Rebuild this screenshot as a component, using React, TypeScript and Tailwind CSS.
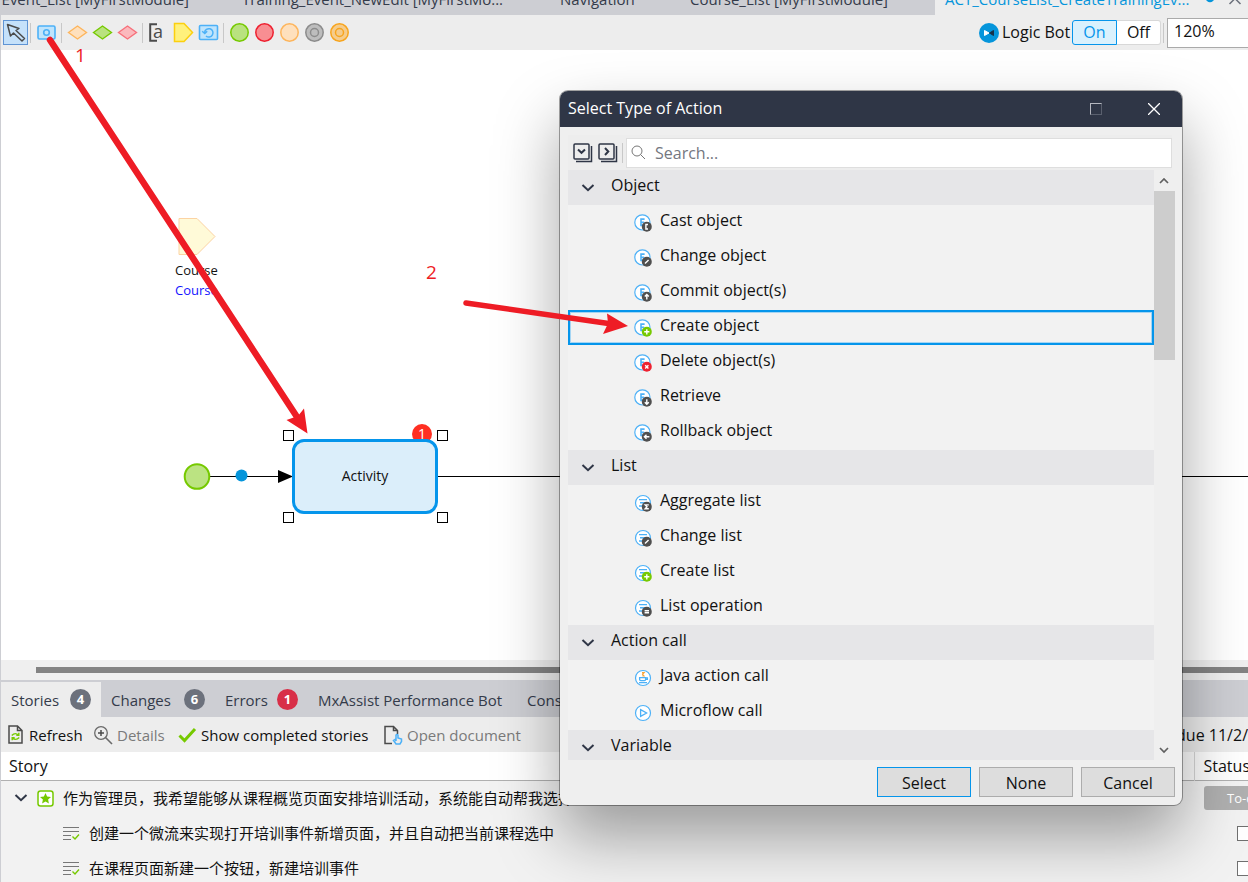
import React from "react";

const BLUE = "#4db1f7";
const DARK = "#4f4f4f";

type BadgeKind = "cast" | "change" | "commit" | "create" | "delete" | "retrieve" | "rollback" | "sum" | "equals";

const badgeMarks: Record<BadgeKind, string> = {
  cast: "M14 10.5H11.9V15H14",
  change: "M11 14.6L14.6 11",
  commit: "M12.8 15.4V10.6M10.8 12.4L12.8 10.4L14.8 12.4",
  create: "M12.8 10.2V15.4M10.2 12.8H15.4",
  delete: "M11.2 11.2L14.4 14.4M14.4 11.2L11.2 14.4",
  retrieve: "M12.8 10.2V15M10.8 13.2L12.8 15.2L14.8 13.2",
  rollback: "M15.4 12.8H10.6M12.5 10.8L10.4 12.8L12.5 14.8",
  sum: "M14.8 10.9H11.2L13 12.8L11.2 14.7H14.8",
  equals: "M10.6 11.8H15M10.6 13.8H15",
};

function Badge({ kind }: { kind: BadgeKind }) {
  const fill = kind === "create" ? "#76c900" : kind === "delete" ? "#ee2130" : DARK;
  return (
    <>
      <circle cx="12.8" cy="12.8" r="5" fill={fill} />
      <path d={badgeMarks[kind]} fill="none" stroke="#fff" strokeWidth="1.4" />
    </>
  );
}

function ObjectIcon({ kind }: { kind: BadgeKind }) {
  return (
    <svg width="18" height="18" viewBox="0 0 18 18" aria-hidden="true">
      <circle cx="8.4" cy="8.4" r="7.6" fill="#fff" stroke={BLUE} strokeWidth="1.2" />
      <path d="M10.6 5.1H7V11.4H10.6M7 8.2H10.2" fill="none" stroke={BLUE} strokeWidth="1.6" />
      <Badge kind={kind} />
    </svg>
  );
}

function ListIcon({ kind }: { kind: BadgeKind }) {
  return (
    <svg width="18" height="18" viewBox="0 0 18 18" aria-hidden="true">
      <circle cx="9" cy="9" r="7.5" fill="#fff" stroke={BLUE} strokeWidth="1.2" />
      <path d="M5 5.6H13M6 8.8H13M5 12H9" fill="none" stroke={BLUE} strokeWidth="1.4" />
      <Badge kind={kind} />
    </svg>
  );
}

function JavaIcon() {
  return (
    <svg width="18" height="18" viewBox="0 0 18 18" aria-hidden="true">
      <circle cx="9" cy="9" r="7.5" fill="#fff" stroke={BLUE} strokeWidth="1.2" />
      <path d="M5.6 8.6H11.6V10.6Q11.6 11.6 10.4 11.6H6.8Q5.6 11.6 5.6 10.6ZM11.6 8.8H13.4V10.4H11.6M5 13.6H13" fill="none" stroke={BLUE} strokeWidth="1.3" />
      <path d="M8 3.6H10L8.6 5.2L9.8 6.8H8.4" fill="none" stroke="#f9a63a" strokeWidth="1.3" />
    </svg>
  );
}

function MicroflowIcon() {
  return (
    <svg width="18" height="18" viewBox="0 0 18 18" aria-hidden="true">
      <circle cx="9" cy="9" r="7.5" fill="#fff" stroke={BLUE} strokeWidth="1.2" />
      <path d="M6.6 5.6L12.6 9L6.6 12.4Z" fill="none" stroke={BLUE} strokeWidth="1.3" />
    </svg>
  );
}

function Chevron() {
  return (
    <svg width="14" height="10" viewBox="0 0 14 10" aria-hidden="true">
      <path d="M1.5 2L7 7.2L12.5 2" fill="none" stroke="#2f3646" strokeWidth="2" />
    </svg>
  );
}

const groups: { title: string; items: { label: string; icon: React.ReactNode }[] }[] = [
  {
    title: "Object",
    items: [
      { label: "Cast object", icon: <ObjectIcon kind="cast" /> },
      { label: "Change object", icon: <ObjectIcon kind="change" /> },
      { label: "Commit object(s)", icon: <ObjectIcon kind="commit" /> },
      { label: "Create object", icon: <ObjectIcon kind="create" /> },
      { label: "Delete object(s)", icon: <ObjectIcon kind="delete" /> },
      { label: "Retrieve", icon: <ObjectIcon kind="retrieve" /> },
      { label: "Rollback object", icon: <ObjectIcon kind="rollback" /> },
    ],
  },
  {
    title: "List",
    items: [
      { label: "Aggregate list", icon: <ListIcon kind="sum" /> },
      { label: "Change list", icon: <ListIcon kind="change" /> },
      { label: "Create list", icon: <ListIcon kind="create" /> },
      { label: "List operation", icon: <ListIcon kind="equals" /> },
    ],
  },
  {
    title: "Action call",
    items: [
      { label: "Java action call", icon: <JavaIcon /> },
      { label: "Microflow call", icon: <MicroflowIcon /> },
    ],
  },
  { title: "Variable", items: [] },
];

function Separator() {
  return <span className="flex h-5 w-[6px] shrink-0 pl-[2px]"><span className="w-px bg-[#c8c8c8]" /></span>;
}

function Tool({ label, active, children }: { label: string; active?: boolean; children: React.ReactNode }) {
  return (
    <button
      aria-label={label}
      className={
        active
          ? "grid h-[25px] w-[25px] shrink-0 place-items-center border border-[#5f94d4] bg-[#c5e1fa]"
          : "grid h-[25px] w-[25px] shrink-0 place-items-center"
      }
    >
      <svg width="23" height="23" viewBox="0 0 23 23" aria-hidden="true" fill="none">
        {children}
      </svg>
    </button>
  );
}

function DocumentTabs() {
  return (
    <nav className="flex h-[15px] shrink-0 overflow-hidden bg-[#cdced3] text-[15px] text-[#343b4a]">
      <a href="#event-list" className="flex w-[188px] shrink-0 items-end justify-end whitespace-nowrap pb-[6px] leading-5">Event_List [MyFirstModule]</a>
      <a href="#new-edit" className="flex w-[319px] shrink-0 items-end whitespace-nowrap pb-[6px] pl-[53px] leading-5">Training_Event_NewEdit [MyFirstMo...</a>
      <a href="#navigation" className="flex w-[130px] shrink-0 items-end whitespace-nowrap pb-[6px] pl-[52px] leading-5">Navigation</a>
      <a href="#course-list" className="flex grow items-end whitespace-nowrap pb-[6px] pl-[52px] leading-5">Course_List [MyFirstModule]</a>
      <div className="flex w-[313px] shrink-0 items-end bg-[#ededed] pl-[10px] text-[#0595db]">
        <a href="#create-training" className="w-[258px] whitespace-nowrap pb-[6px] leading-5">ACT_CourseList_CreateTrainingEv...</a>
        <svg className="self-start" width="45" height="8" viewBox="0 0 45 8" aria-hidden="true">
          <circle cx="7" cy="-2" r="4.3" fill="#0595db" />
          <path d="M26.5 4L32 -1.5L37.5 4" fill="none" stroke="#6c717c" strokeWidth="1.5" />
        </svg>
      </div>
    </nav>
  );
}

function EditorToolbar() {
  return (
    <div className="flex h-[35px] shrink-0 items-center overflow-hidden bg-[#ededed] pl-[2px]">
      <Tool label="Select" active>
        <path d="M3.5 3.5L6.5 15L9.5 12L18 20L20.5 17.5L12 9.5L15 7.5Z" stroke="#4b4b4b" strokeWidth="1.5" strokeLinejoin="round" />
      </Tool>
      <Separator />
      <Tool label="Activity">
        <rect x="3" y="5" width="17" height="13" rx="1.5" fill="#bfe4fc" stroke={BLUE} strokeWidth="1.6" />
        <circle cx="11.5" cy="11.5" r="2.8" stroke={BLUE} strokeWidth="1.6" />
      </Tool>
      <Separator />
      <Tool label="Decision">
        <path d="M2.5 11.5L11.5 5L20.5 11.5L11.5 18Z" fill="#fee0bd" stroke="#fdb55c" strokeWidth="1.4" />
      </Tool>
      <Tool label="Merge">
        <path d="M2.5 11.5L11.5 5L20.5 11.5L11.5 18Z" fill="#b9e27f" stroke="#76c900" strokeWidth="1.4" />
      </Tool>
      <Tool label="Object type decision">
        <path d="M2.5 11.5L11.5 5L20.5 11.5L11.5 18Z" fill="#fbb9bd" stroke="#f7717b" strokeWidth="1.4" />
      </Tool>
      <Separator />
      <button aria-label="Annotation" className="flex h-[25px] w-[25px] shrink-0 items-center pl-[2px] text-[#4b4b4b]">
        <svg width="9" height="19" viewBox="0 0 9 19" aria-hidden="true"><path d="M9 1.2H2.2V17.8H9" fill="none" stroke="currentColor" strokeWidth="2" /></svg>
        <span className="-ml-1 pb-[3px] text-[18px] font-medium leading-5">a</span>
      </button>
      <Tool label="Parameter">
        <path d="M2.5 2.5H12L20.5 11.5L12 20.5H2.5Z" fill="#fff17c" stroke="#fcd00f" strokeWidth="1.5" />
      </Tool>
      <Tool label="Loop">
        <rect x="2.5" y="4.5" width="18" height="14" rx="1" fill="#bfe4fc" stroke={BLUE} strokeWidth="1.6" />
        <path d="M9 15A4.2 4.2 0 1 0 7.6 11.5M5.2 10.3L7.8 12.6L10.2 10.3" stroke={BLUE} strokeWidth="1.5" />
      </Tool>
      <Separator />
      <Tool label="Start event"><circle cx="11.5" cy="11.5" r="8.7" fill="#b9e27f" stroke="#76c900" strokeWidth="1.5" /></Tool>
      <Tool label="End event"><circle cx="11.5" cy="11.5" r="8.7" fill="#f88e92" stroke="#ee2130" strokeWidth="1.5" /></Tool>
      <Tool label="Error event"><circle cx="11.5" cy="11.5" r="8.7" fill="#fee0bd" stroke="#fdb55c" strokeWidth="1.5" /></Tool>
      <Tool label="Continue event">
        <circle cx="11.5" cy="11.5" r="8.7" fill="#bdbdbd" stroke="#8c8c8c" strokeWidth="1.5" />
        <circle cx="11.5" cy="11.5" r="4" stroke="#8c8c8c" strokeWidth="1.5" />
      </Tool>
      <Tool label="Break event">
        <circle cx="11.5" cy="11.5" r="8.7" fill="#f5cc8c" stroke="#f7a41d" strokeWidth="1.5" />
        <circle cx="11.5" cy="11.5" r="4" stroke="#f7a41d" strokeWidth="1.5" />
      </Tool>
      <div className="ml-auto flex shrink-0 items-center">
        <svg width="20" height="20" viewBox="0 0 20 20" aria-hidden="true">
          <circle cx="10" cy="10" r="10" fill="#0595db" />
          <path d="M5.5 7.5L10 10L5.5 12.5Z" fill="#fff" stroke="#fff" strokeLinejoin="round" />
          <path d="M14.500 7.5L10.5 10L14.500 12.500Z" fill="#18324a" stroke="#18324a" strokeLinejoin="round" />
        </svg>
        <span className="w-[73px] whitespace-nowrap pb-[2px] pl-[3px] leading-5">Logic Bot</span>
        <button className="h-[25px] w-[45px] rounded-l-[3px] border border-[#0595eb] bg-[#daf1fd] pb-px leading-5 text-[#0595eb]">On</button>
        <button className="h-[25px] w-11 rounded-r-[3px] border border-l-0 border-[#d8d8d8] bg-white pb-px leading-5">Off</button>
        <Separator />
        <input aria-label="Zoom" defaultValue="120%" className="h-[30px] w-[81px] border border-r-0 border-[#aaaaaa] bg-white pb-1 pl-[6px] outline-none" />
      </div>
    </div>
  );
}

function Handle({ className }: { className: string }) {
  return <span className={"absolute size-[11px] border border-black bg-white " + className} />;
}

function Canvas() {
  return (
    <main className="relative min-h-0 grow overflow-hidden bg-white">
      <svg className="absolute left-[176px] top-[166px]" width="40" height="40" viewBox="0 0 40 40" aria-hidden="true">
        <path d="M2 2.5H20L38 20.5L20 38.5H2Z" fill="#fffad8" stroke="#fcd3a3" />
      </svg>
      <span className="absolute left-[174px] top-[211px] text-[13px] leading-[18px]">Course</span>
      <span className="absolute left-[174px] top-[231px] text-[13px] leading-[18px] text-[#1414ff]">Course</span>
      <span className="absolute left-[196px] right-0 top-[426px] h-px bg-black" />
      <svg className="absolute left-[182px] top-[412px]" width="112" height="30" viewBox="0 0 112 30" aria-hidden="true">
        <circle cx="14" cy="14.5" r="12.3" fill="#bbe382" stroke="#76c900" strokeWidth="2" />
        <circle cx="58.5" cy="13.5" r="6" fill="#0595db" />
        <path d="M95 8L110 14.5L95 21Z" fill="#000" />
      </svg>
      <span className="absolute left-[411px] top-[374px] size-5 rounded-full bg-[#ff2f22]" />
      <div className="absolute left-[291px] top-[389px] grid h-[75px] w-[146px] place-items-center rounded-[12px] border-[3px] border-[#0595eb] bg-[#dbeefa] pb-px text-[14px]">Activity</div>
      <span className="absolute left-[411px] top-[376px] w-5 text-center text-[14px] leading-4 text-white">1</span>
      <Handle className="left-[282px] top-[380px]" />
      <Handle className="left-[436px] top-[380px]" />
      <Handle className="left-[282px] top-[462px]" />
      <Handle className="left-[436px] top-[462px]" />
    </main>
  );
}

function PanelTab({ label, count, className }: { label: string; count?: { value: number; tone: string }; className: string }) {
  return (
    <button className={"flex shrink-0 items-center justify-between whitespace-nowrap px-[10px] " + className}>
      {label}
      {count && (
        <span className={"grid size-[21px] place-items-center rounded-full pb-[2px] text-[13px] font-bold leading-4 text-white " + count.tone}>{count.value}</span>
      )}
    </button>
  );
}

function StoryLine({ text }: { text: string }) {
  return (
    <div className="flex h-[35px] items-center gap-[9px] whitespace-nowrap pl-[62px]">
      <svg width="17" height="16" viewBox="0 0 17 16" aria-hidden="true">
        <path d="M0 2.5H16M0 6.5H16M0 10.5H8M0 14.5H8" stroke="#777" fill="none" />
        <path d="M9.5 11.5L12 14L16 9.5" stroke="#76c900" strokeWidth="1.4" fill="none" />
      </svg>
      {text}
    </div>
  );
}

function StoriesPanel() {
  return (
    <section className="h-[222px] shrink-0 overflow-hidden">
      <div className="flex h-5 items-center bg-[#efefef] pl-[35px]"><div className="h-[6px] grow bg-[#838383]" /></div>
      <div className="flex h-[37px] overflow-hidden bg-[#cdced3] pt-[2px] text-[15px] text-[#343b4a]">
        <PanelTab label="Stories" count={{ value: 4, tone: "bg-[#6c717c]" }} className="w-[100px] bg-[#ededed]" />
        <PanelTab label="Changes" count={{ value: 6, tone: "bg-[#6c717c]" }} className="w-[114px]" />
        <PanelTab label="Errors" count={{ value: 1, tone: "bg-[#d82f48]" }} className="w-[93px]" />
        <PanelTab label="MxAssist Performance Bot" className="w-[209px]" />
        <PanelTab label="Console" className="w-20" />
      </div>
      <div className="flex h-[35px] items-center overflow-hidden whitespace-nowrap bg-[#ededed] pl-[7px] text-[15px]">
        <button className="flex w-[85px] shrink-0 items-center gap-[6px]">
          <svg width="15" height="19" viewBox="0 0 15 19" fill="none" aria-hidden="true">
            <path d="M1 1H9.5L14 5.5V18H1ZM9.5 1V5.5H14" stroke="#4b4b4b" strokeWidth="1.5" />
            <path d="M3.8 10.5Q7 7 10.500 10M10.800 7.800V10.300H8.300M11.200 12.500Q8 16 4.500 13M4.200 15.200V12.700H6.700" stroke="#76c900" strokeWidth="1.4" />
          </svg>
          Refresh
        </button>
        <button disabled className="flex w-[85px] shrink-0 items-center gap-[4px] text-[#7a7a7a]">
          <svg width="20" height="20" viewBox="0 0 20 20" fill="none" aria-hidden="true">
            <circle cx="8" cy="8" r="6.3" stroke="#6a6a6a" strokeWidth="1.3" />
            <path d="M8 5V11M5 8H11" stroke="#4b4b4b" strokeWidth="1.5" />
            <path d="M12.5 12.5L19 19" stroke="#6a6a6a" strokeWidth="1.6" />
          </svg>
          Details
        </button>
        <button className="flex w-[205px] shrink-0 items-center gap-1">
          <svg width="19" height="16" viewBox="0 0 19 16" fill="none" aria-hidden="true">
            <path d="M1.5 8.5L6.5 13.5L17 2" stroke="#76c900" strokeWidth="3" />
          </svg>
          Show completed stories
        </button>
        <button disabled className="flex shrink-0 items-center gap-1 text-[#7a7a7a]">
          <svg width="20" height="20" viewBox="0 0 20 20" fill="none" aria-hidden="true">
            <path d="M9 18.5H2V1.5H10.5L14.5 5.5V9M10.5 1.5V5.5H14.5" stroke="#4b4b4b" strokeWidth="1.5" />
            <path d="M13 16V10Q14 9 15 10V13L18.5 14V16.5L17 19H13L10.5 15.5L12 14.5L13 16" stroke={BLUE} strokeWidth="1.5" />
          </svg>
          Open document
        </button>
        <span className="ml-auto shrink-0 text-[16px]">due 11/2/</span>
      </div>
      <table className="w-full table-fixed border-collapse bg-[#f2f2f2] text-left">
        <thead>
          <tr className="h-7 border-b border-[#b0b0b0] bg-white">
            <th className="pl-2 font-normal">Story</th>
            <th className="w-[54px] border-l border-[#d8d8d8] pl-[9px] font-normal">Status</th>
          </tr>
        </thead>
        <tbody className="text-[15px]">
          <tr>
            <td className="p-0">
              <div className="flex h-[35px] items-center whitespace-nowrap pl-[13px]">
                <Chevron />
                <svg className="mx-[9px]" width="17" height="17" viewBox="0 0 17 17" aria-hidden="true">
                  <rect x="1" y="1" width="15" height="15" rx="2.5" fill="#fff" stroke="#76c900" strokeWidth="1.5" />
                  <path d="M8.5 3L10.1 6.6L14 7L11.1 9.6L11.9 13.5L8.5 11.5L5.1 13.5L5.9 9.6L3 7L6.9 6.6Z" fill="#76c900" />
                </svg>
                作为管理员，我希望能够从课程概览页面安排培训活动，系统能自动帮我选择
              </div>
            </td>
            <td className="overflow-hidden p-0">
              <div className="ml-[10px] h-6 w-20 whitespace-nowrap rounded-[3px] bg-[#b0b0b0] pl-[23px] text-[13px] leading-6 text-white">To-do</div>
            </td>
          </tr>
          {["创建一个微流来实现打开培训事件新增页面，并且自动把当前课程选中", "在课程页面新建一个按钮，新建培训事件"].map((text) => (
            <tr key={text}>
              <td className="p-0"><StoryLine text={text} /></td>
              <td className="overflow-hidden p-0">
                <div className="flex pl-[43px]">
                  <input type="checkbox" aria-label={text} className="size-[15px] shrink-0 appearance-none border border-[#707070] bg-white" />
                </div>
              </td>
            </tr>
          ))}
        </tbody>
      </table>
    </section>
  );
}

function ActionDialog() {
  return (
    <div
      role="dialog"
      aria-labelledby="action-title"
      className="absolute left-[560px] top-[91px] flex h-[714px] w-[622px] flex-col overflow-hidden rounded-[8px] bg-[#efefef] shadow-[0_0_0_1px_rgba(0,0,0,0.35),0_32px_64px_rgba(0,0,0,0.36)]"
    >
      <header className="flex h-9 shrink-0 items-center bg-[#2f3646] pl-2 pr-[22px] text-white">
        <h1 id="action-title" className="grow pb-[2px]">Select Type of Action</h1>
        <button aria-label="Maximize" className="mr-[46px] size-3 border border-[#5a606e] border-l-[#b4b7bf] border-t-[#b4b7bf]" />
        <button aria-label="Close">
          <svg width="12" height="12" viewBox="0 0 12 12" aria-hidden="true"><path d="M0 0L12 12M12 0L0 12" stroke="#fff" strokeWidth="1.3" /></svg>
        </button>
      </header>
      <div className="ml-2 mr-[10px] mt-2 flex h-[35px] shrink-0 items-center bg-[#ededed]">
        {["Expand all", "Collapse all"].map((label, index) => (
          <button key={label} aria-label={label} className="flex h-[25px] w-[25px] items-center pl-[5px]">
            <svg className="shrink-0" width="20" height="20" viewBox="0 0 20 20" fill="none" aria-hidden="true">
              <rect x="1" y="1" width="15" height="15" rx="1" stroke="#2f3646" strokeWidth="1.5" />
              <path d="M18.5 3V18.5H3" stroke="#2f3646" strokeWidth="1.5" />
              <path d={index === 0 ? "M5 6.5L8.5 9.8L12 6.5" : "M7 5L10.3 8.5L7 12"} stroke="#2f3646" strokeWidth="2" />
            </svg>
          </button>
        ))}
        <span className="ml-1 mr-[3px] h-5 w-px bg-[#c8c8c8]" />
        <label className="flex h-[30px] grow items-center gap-[9px] border border-[#dedede] bg-white pl-1">
          <svg width="15" height="15" viewBox="0 0 15 15" fill="none" aria-hidden="true">
            <circle cx="6" cy="6" r="5" stroke="#777" />
            <path d="M9.5 9.5L14 14" stroke="#777" />
          </svg>
          <input aria-label="Search" placeholder="Search..." className="min-w-0 grow bg-transparent outline-none placeholder:text-[#74777f]" />
        </label>
      </div>
      <div className="ml-2 mr-[7px] flex min-h-0 grow">
        <div className="min-w-0 grow overflow-hidden bg-[#f2f2f2]">
          {groups.map((group) => (
            <section key={group.title}>
              <h2 className="flex h-[35px] items-center gap-4 bg-[#e6e6e8] pl-[13px]">
                <span className="pt-px"><Chevron /></span>
                <span className="pb-[5px]">{group.title}</span>
              </h2>
              <ul>
                {group.items.map((item) => (
                  <li key={item.label}>
                    <button
                      className={
                        item.label === "Create object"
                          ? "flex h-[35px] w-full items-center gap-2 pl-[66px] text-left shadow-[inset_0_0_0_2px_#0595eb,inset_0_0_0_3px_#a5d5f3]"
                          : "flex h-[35px] w-full items-center gap-2 pl-[66px] text-left"
                      }
                    >
                      {item.icon}
                      <span className="pb-[5px]">{item.label}</span>
                    </button>
                  </li>
                ))}
              </ul>
            </section>
          ))}
        </div>
        <div className="flex w-[21px] shrink-0 flex-col items-center">
          <svg className="shrink-0" width="21" height="21" viewBox="0 0 21 21" aria-hidden="true"><path d="M6 13L10 9L14 13" fill="none" stroke="#606060" strokeWidth="1.7" /></svg>
          <div className="h-[169px] w-full bg-[#cdcdcd]" />
          <svg className="mt-auto shrink-0" width="21" height="21" viewBox="0 0 21 21" aria-hidden="true"><path d="M6 9L10 13L14 9" fill="none" stroke="#606060" strokeWidth="1.7" /></svg>
        </div>
      </div>
      <footer className="flex h-[45px] shrink-0 items-start justify-end gap-2 pr-[7px] pt-[7px]">
        <button className="h-[30px] w-[94px] border border-[#0595eb] bg-[#dddddd] pt-px">Select</button>
        <button className="h-[30px] w-[94px] border border-[#acacac] bg-[#dddddd] pt-px">None</button>
        <button className="h-[30px] w-[94px] border border-[#acacac] bg-[#dddddd] pt-px">Cancel</button>
      </footer>
    </div>
  );
}

function Callouts() {
  return (
    <div className="pointer-events-none absolute inset-0 text-[19px] leading-6 text-[#ee1c25]">
      <svg className="absolute left-0 top-0" width="640" height="450" viewBox="0 0 640 450" fill="#ee1c25" aria-hidden="true">
        <path d="M50 40L299 420" stroke="#ee1c25" strokeWidth="6.5" strokeLinecap="round" />
        <path d="M307.5 433.5L304 408.5L298 416L286.5 420Z" />
        <path d="M466 303L612 324" stroke="#ee1c25" strokeWidth="5.5" strokeLinecap="round" />
        <path d="M628 326L607 313.5L608 323.5L603 334Z" />
      </svg>
      <span className="absolute left-[75px] top-[43px]">1</span>
      <span className="absolute left-[426px] top-[260px]">2</span>
    </div>
  );
}

export default function App() {
  return (
    <div className="relative flex h-screen flex-col overflow-hidden border-l border-[#cdced3] bg-[#f2f2f2] font-['Open_Sans','Noto_Sans_CJK_SC',sans-serif] text-[16px] leading-6 text-[#111111]">
      <DocumentTabs />
      <EditorToolbar />
      <Canvas />
      <StoriesPanel />
      <div className="absolute inset-y-0 -left-px right-0 overflow-hidden">
        <ActionDialog />
        <Callouts />
      </div>
    </div>
  );
}
